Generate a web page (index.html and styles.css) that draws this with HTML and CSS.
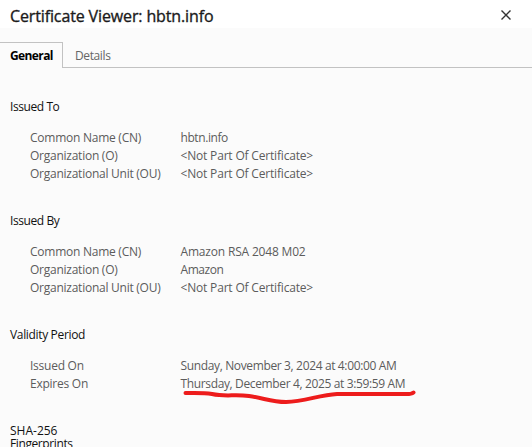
FILE: index.html
```html
<!DOCTYPE html>
<html lang="en"><head><meta charset="utf-8"><title>Certificate Viewer</title><link rel="stylesheet" href="styles.css"></head>
<body>
<header><h1>Certificate Viewer: hbtn.info</h1>
<svg class="close" viewBox="0 0 12 12"><path d="M1.5 1.5l9 9M10.5 1.5l-9 9"/></svg></header>
<nav><span class="tab active">General</span><span class="tab">Details</span></nav>
<main>
<section><h2 class="snug">Issued To</h2><dl><dt>Common Name (CN)</dt><dd class="snug">hbtn.info</dd><dt>Organization (O)</dt><dd>&lt;Not Part Of Certificate&gt;</dd><dt>Organizational Unit (OU)</dt><dd>&lt;Not Part Of Certificate&gt;</dd></dl></section>
<section><h2 class="snug">Issued By</h2><dl><dt>Common Name (CN)</dt><dd>Amazon RSA 2048 M02</dd><dt>Organization (O)</dt><dd class="snug">Amazon</dd><dt>Organizational Unit (OU)</dt><dd>&lt;Not Part Of Certificate&gt;</dd></dl></section>
<section><h2>Validity Period</h2><dl><dt>Issued On</dt><dd class="date">Sunday, November 3, 2024 at 4:00:00 AM</dd><dt>Expires On</dt><dd class="date marked">Thursday, December 4, 2025 at 3:59:59 AM<svg class="stroke" viewBox="0 0 240 20"><path d="M4.500 7C14 7 22 6.500 31 8C45 11 53 8 68 10C83 12 90 16 105 16C124 15.500 138 9 156 8H223Q230 8.500 232.500 6.500"/></svg></dd></dl></section>
<section><h2 class="tight"><span class="sha">SHA-256</span> Fingerprints</h2></section>
</main>
</body></html>
```
FILE: styles.css
```css
*{box-sizing:border-box}
body{margin:0;width:532px;height:447px;overflow:hidden;background:#fbfbfb;color:#111;font:12px/18px "Open Sans","Noto Sans",sans-serif;display:flex;flex-direction:column}
header{height:28px;margin-bottom:14px;background:#fff;display:flex;justify-content:space-between;padding:6px 20px 0 10px}
h1{margin:0;font-size:16px;line-height:20px;font-weight:400;letter-spacing:-.13px;color:#1b1b1b;-webkit-text-stroke:.35px #1b1b1b}
.close{width:12px;height:12px;margin-top:3px;stroke:#333;fill:none;stroke-width:1.4}
nav{display:flex;flex:none;height:26px;border-bottom:1px solid #c2c2c2;letter-spacing:-.38px}
.tab{padding:5px 12px 0;color:#666;height:26px}
.active{width:63px;padding:4px 0 0 10px;border:solid #c2c2c2;border-width:1px 1px 0 0;background:#fbfbfb;color:#000;font-weight:700;letter-spacing:-.6px}
main{padding:30px 10px 0;flex:1;min-height:0;overflow:hidden}
section{height:114px}
h2{margin:0 0 13px;font-size:12px;line-height:18px;font-weight:400;letter-spacing:-.34px}
section:last-child{margin-top:-18px;height:auto}
.snug{letter-spacing:-.42px}
.tight{width:80px;margin:2px 0 0;line-height:13px;letter-spacing:-.4px}
.sha{letter-spacing:0}
dl{margin:0;padding-left:20px;display:grid;grid-template-columns:150.5px 1fr;color:#5c5c5c}
dt{letter-spacing:-.25px}
dd{margin:0;white-space:nowrap;letter-spacing:-.18px}
dd.snug{letter-spacing:-.42px}
dd.date{letter-spacing:-.36px}
.marked{position:relative}
.stroke{position:absolute;left:0;top:11px;width:240px;height:20px;fill:none;stroke:#ed1c1c;stroke-width:4;stroke-linecap:round}
```
